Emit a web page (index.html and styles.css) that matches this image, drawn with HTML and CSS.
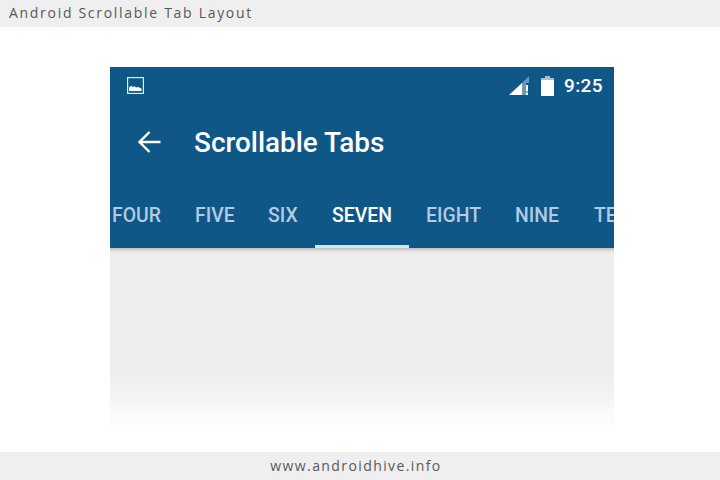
FILE: index.html
```html
<!DOCTYPE html>
<html lang="en">
<head>
<meta charset="utf-8">
<title>Android Scrollable Tab Layout</title>
<link rel="stylesheet" href="styles.css">
</head>
<body>
<header class="top-bar">Android Scrollable Tab Layout</header>
<main class="stage">
  <section class="phone">
    <div class="chrome">
      <div class="status">
        <svg class="pic" width="17" height="17" viewBox="0 0 17 17"><rect x=".6" y=".6" width="15.800" height="15.800" fill="none" stroke="#dfe9f1" stroke-width="1.200"/><path d="M2 14v-3.500l2-1.700 2 1.200 1.500-.8 1.500 1.300 2-.5 3.500 1.500V14z" fill="#fff"/></svg>
        <div class="status-right">
          <svg class="signal" width="21" height="20" viewBox="0 0 21 20"><path d="M0 19 13 7v12z" fill="#fff"/><path d="M13 7 20 0v7h-3v12h-4z" fill="#6f97b6"/><rect x="17" y="9" width="2" height="6.500" fill="#fff"/><rect x="17" y="16.500" width="2" height="2.500" fill="#fff"/></svg>
          <svg class="battery" width="13" height="20" viewBox="0 0 13 20"><path d="M4 0h5v2H4z" fill="#a8c0d3"/><path d="M0 2h13v2H0z" fill="#a8c0d3"/><rect y="4" width="13" height="16" fill="#fff"/></svg>
          <span class="clock">9:25</span>
        </div>
      </div>
      <div class="toolbar">
        <svg class="back" width="24" height="24" viewBox="0 0 24 24"><path d="M23.500 12H2.500M12.500 2 2.500 12l10 10" fill="none" stroke="#fff" stroke-width="2.400"/></svg>
        <h1 class="title">Scrollable Tabs</h1>
      </div>
      <nav class="tabs">
        <span class="tab tab-four">FOUR</span>
        <span class="tab tab-five">FIVE</span>
        <span class="tab tab-six">SIX</span>
        <span class="tab tab-seven">SEVEN</span>
        <span class="tab tab-eight">EIGHT</span>
        <span class="tab tab-nine">NINE</span>
        <span class="tab">TEN</span>
      </nav>
    </div>
    <div class="content"></div>
  </section>
</main>
<footer class="bottom-bar">www.androidhive.info</footer>
</body>
</html>
```
FILE: styles.css
```css
* { box-sizing: border-box; }
html, body { margin: 0; padding: 0; }
body {
  width: 720px;
  height: 480px;
  overflow: hidden;
  background: #fff;
  display: flex;
  flex-direction: column;
  font-family: "Open Sans", "Liberation Sans", sans-serif;
}
.top-bar {
  height: 27px;
  flex: none;
  background: #efefef;
  color: #58585a;
  font-size: 14px;
  line-height: 26px;
  letter-spacing: 1.7px;
  padding-left: 9px;
}
.stage {
  flex: 1;
  padding: 40px 106px 0 110px;
}
.phone {
  width: 504px;
  height: 385px;
  display: flex;
  flex-direction: column;
  font-family: Roboto, "Liberation Sans", sans-serif;
}
.chrome {
  flex: none;
  height: 181px;
  background: #0f5787;
  color: #fff;
  display: flex;
  flex-direction: column;
}
.status {
  height: 37px;
  flex: none;
  padding: 0 11px 0 17px;
  display: flex;
  align-items: center;
  justify-content: space-between;
}
.status-right {
  display: flex;
  align-items: center;
  height: 20px;
}
.signal { margin-right: 11px; }
.battery { margin-right: 10px; flex: none; }
.clock { font-size: 19px; font-weight: 500; line-height: 20px; letter-spacing: .4px; }
.toolbar {
  height: 76px;
  flex: none;
  display: flex;
  align-items: center;
  padding: 1px 0 0 27px;
}
.back { margin: -1px 33px 0 0; flex: none; }
.title {
  margin: 0;
  font-size: 27.900px;
  font-weight: 500;
  line-height: 34px;
}
.tabs {
  flex: 1;
  display: flex;
  overflow: hidden;
  align-items: stretch;
  padding-left: 2px;
  white-space: nowrap;
}
.tab {
  flex: none;
  font-size: 19.400px;
  font-weight: 500;
  color: #b1cbe3;
  line-height: 26px;
  padding-top: 23px;
}
.tab-four { width: 83px; }
.tab-five { width: 73px; }
.tab-six { width: 47px; }
.tab-seven {
  width: 94px;
  margin-right: 17px;
  color: #fff;
  text-align: center;
  border-bottom: 3px solid #c8ecf6;
}
.tab-eight { width: 89px; }
.tab-nine { width: 79px; }
.content {
  flex: 1;
  background: linear-gradient(to bottom, #bdbdbd 0, #d6d6d6 2px, #e8e8e8 4px, #eeeeee 7px, #eeeeee 125px, #f4f4f4 150px, #fbfbfb 165px, #fff 186px);
}
.bottom-bar {
  height: 28px;
  flex: none;
  background: #efefef;
  color: #58585a;
  font-size: 14px;
  line-height: 27px;
  letter-spacing: 1.4px;
  text-align: center;
  padding-right: 8px;
}
```
